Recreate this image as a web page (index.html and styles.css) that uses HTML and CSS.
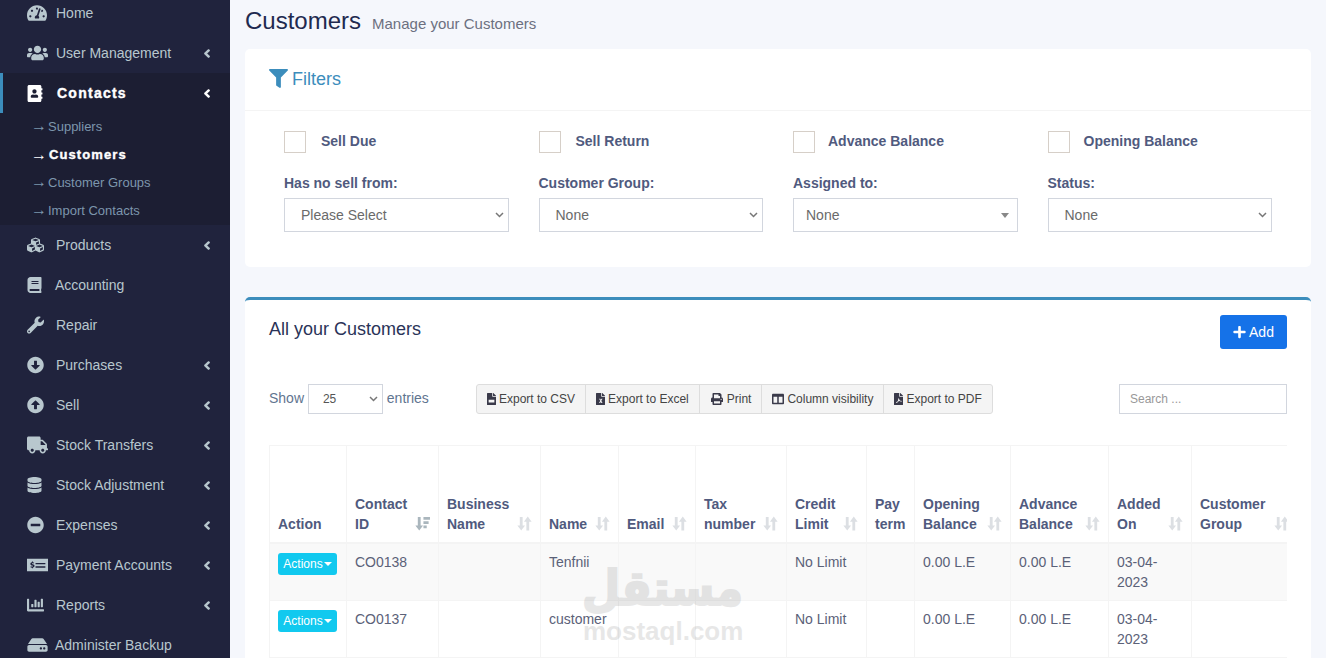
FILE: index.html
```html
<!DOCTYPE html>
<html lang="en">
<head>
<meta charset="utf-8">
<title>Customers</title>
<link rel="stylesheet" href="styles.css">
</head>
<body>
<svg class="defs" xmlns="http://www.w3.org/2000/svg">
<symbol id="i-chev" viewBox="0 0 320 512"><path d="M34.52 239.03L228.87 44.69c9.37-9.37 24.57-9.37 33.94 0l22.67 22.67c9.36 9.36 9.37 24.52.04 33.9L131.49 256l154.02 154.75c9.34 9.38 9.32 24.54-.04 33.9l-22.67 22.67c-9.37 9.37-24.57 9.37-33.94 0L34.52 272.97c-9.37-9.37-9.37-24.57 0-33.94z"/></symbol>
<symbol id="i-home" viewBox="0 0 576 512"><path d="M288 32C128.94 32 0 160.94 0 320c0 52.8 14.25 102.26 39.06 144.8 5.61 9.62 16.3 15.2 27.44 15.2h443c11.14 0 21.83-5.58 27.44-15.2C561.75 422.26 576 372.8 576 320c0-159.06-128.94-288-288-288zm0 64c14.71 0 26.58 10.13 30.32 23.65-1.11 2.26-2.64 4.23-3.45 6.67l-9.22 27.67c-5.13 3.49-10.97 6.01-17.64 6.01-17.67 0-32-14.33-32-32S270.33 96 288 96zM96 384c-17.67 0-32-14.33-32-32s14.33-32 32-32 32 14.33 32 32-14.33 32-32 32zm48-160c-17.67 0-32-14.33-32-32s14.33-32 32-32 32 14.33 32 32-14.33 32-32 32zm246.77-72.41l-61.33 184C343.13 347.33 352 364.54 352 384c0 11.72-3.38 22.55-8.88 32H232.88c-5.5-9.45-8.88-20.28-8.88-32 0-33.94 26.5-61.43 59.9-63.59l61.34-184.01c4.17-12.56 17.73-19.45 30.36-15.17 12.57 4.19 19.35 17.79 15.17 30.36zm14.66 57.2l15.52-46.55c3.47-1.29 7.13-2.23 11.05-2.23 17.67 0 32 14.33 32 32s-14.33 32-32 32c-11.38-.01-20.89-6.28-26.57-15.22zM480 384c-17.67 0-32-14.33-32-32s14.33-32 32-32 32 14.33 32 32-14.33 32-32 32z"/></symbol>
<symbol id="i-users" viewBox="0 0 640 512"><path d="M96 224c35.3 0 64-28.7 64-64s-28.7-64-64-64-64 28.7-64 64 28.7 64 64 64zm448 0c35.3 0 64-28.7 64-64s-28.7-64-64-64-64 28.7-64 64 28.7 64 64 64zm32 32h-64c-17.6 0-33.5 7.1-45.1 18.6 40.3 22.1 68.9 62 75.1 109.4h66c17.7 0 32-14.3 32-32v-32c0-35.3-28.7-64-64-64zm-256 0c61.9 0 112-50.1 112-112S381.9 32 320 32 208 82.1 208 144s50.1 112 112 112zm76.8 32h-8.3c-20.8 10-43.9 16-68.5 16s-47.6-6-68.5-16h-8.3C179.6 288 128 339.6 128 403.2V432c0 26.5 21.5 48 48 48h288c26.5 0 48-21.5 48-48v-28.8c0-63.6-51.6-115.2-115.2-115.2zm-223.7-13.4C161.5 263.1 145.6 256 128 256H64c-35.3 0-64 28.7-64 64v32c0 17.7 14.3 32 32 32h65.9c6.3-47.4 34.9-87.3 75.2-109.4z"/></symbol>
<symbol id="i-contacts" viewBox="0 0 448 512"><path d="M436 160c6.6 0 12-5.4 12-12v-40c0-6.6-5.4-12-12-12h-20V48c0-26.5-21.5-48-48-48H48C21.5 0 0 21.5 0 48v416c0 26.5 21.5 48 48 48h320c26.5 0 48-21.5 48-48v-48h20c6.6 0 12-5.4 12-12v-40c0-6.6-5.4-12-12-12h-20v-64h20c6.6 0 12-5.4 12-12v-40c0-6.6-5.4-12-12-12h-20v-64h20zm-228-32c35.3 0 64 28.7 64 64s-28.7 64-64 64-64-28.7-64-64 28.7-64 64-64zm112 236.8c0 10.6-10 19.2-22.4 19.2H118.4C106 384 96 375.4 96 364.8v-19.2c0-31.8 30.1-57.6 67.2-57.6h5c12.3 5.1 25.7 8 39.8 8s27.6-2.9 39.8-8h5c37.1 0 67.2 25.8 67.2 57.6v19.2z"/></symbol>
<symbol id="i-cubes" viewBox="0 0 512 512"><path d="M488.6 250.2L392 214V105.5c0-15-9.3-28.4-23.4-33.7l-100-37.5c-8.1-3.1-17.1-3.1-25.3 0l-100 37.5c-14.1 5.3-23.4 18.7-23.4 33.7V214l-96.6 36.2C9.3 255.5 0 268.9 0 283.9V394c0 13.6 7.7 26.1 19.9 32.2l100 50c10.1 5.1 22.1 5.1 32.2 0l103.9-52 103.9 52c10.1 5.1 22.1 5.1 32.2 0l100-50c12.2-6.1 19.9-18.6 19.9-32.2V283.9c0-15-9.3-28.4-23.4-33.7zM358 214.8l-85 31.9v-68.2l85-37v73.3zM154 104.1l102-38.2 102 38.2v.6l-102 41.4-102-41.4v-.6zm84 291.1l-85 42.5v-79.1l85-38.8v75.4zm0-112l-102 41.4-102-41.4v-.6l102-38.2 102 38.2v.6zm240 112l-85 42.5v-79.1l85-38.8v75.4zm0-112l-102 41.4-102-41.4v-.6l102-38.2 102 38.2v.6z"/></symbol>
<symbol id="i-book" viewBox="0 0 448 512"><path d="M448 360V24c0-13.3-10.7-24-24-24H96C43 0 0 43 0 96v320c0 53 43 96 96 96h328c13.3 0 24-10.7 24-24v-16c0-7.5-3.5-14.3-8.9-18.7-4.2-15.4-4.2-59.3 0-74.7 5.4-4.3 8.9-11.1 8.9-18.6zM128 134c0-3.3 2.7-6 6-6h212c3.3 0 6 2.7 6 6v20c0 3.3-2.7 6-6 6H134c-3.3 0-6-2.7-6-6v-20zm0 64c0-3.3 2.7-6 6-6h212c3.3 0 6 2.7 6 6v20c0 3.3-2.7 6-6 6H134c-3.3 0-6-2.7-6-6v-20zm253.4 250H96c-17.7 0-32-14.3-32-32 0-17.6 14.4-32 32-32h285.4c-1.9 17.1-1.9 46.9 0 64z"/></symbol>
<symbol id="i-wrench" viewBox="0 0 512 512"><path d="M507.73 109.1c-2.24-9.03-13.54-12.09-20.12-5.51l-74.36 74.36-67.88-11.31-11.31-67.88 74.36-74.36c6.62-6.62 3.43-17.9-5.66-20.16-47.38-11.74-99.55.91-136.58 37.93-39.64 39.64-50.55 97.1-34.05 147.2L18.74 402.76c-24.99 24.99-24.99 65.51 0 90.5 24.99 24.99 65.51 24.99 90.5 0l213.21-213.21c50.12 16.71 107.47 5.68 147.37-34.22 37.07-37.07 49.7-89.32 37.91-136.73zM64 472c-13.25 0-24-10.75-24-24 0-13.26 10.75-24 24-24s24 10.74 24 24c0 13.25-10.75 24-24 24z"/></symbol>
<symbol id="i-down" viewBox="0 0 512 512"><path d="M504 256c0 137-111 248-248 248S8 393 8 256 119 8 256 8s248 111 248 248zM212 140v116h-70.9c-10.7 0-16.1 13-8.5 20.5l114.9 114.3c4.7 4.7 12.2 4.7 16.9 0l114.9-114.3c7.6-7.6 2.2-20.5-8.5-20.5H300V140c0-6.6-5.4-12-12-12h-64c-6.6 0-12 5.4-12 12z"/></symbol>
<symbol id="i-up" viewBox="0 0 512 512"><path d="M8 256C8 119 119 8 256 8s248 111 248 248-111 248-248 248S8 393 8 256zm292 116V256h70.9c10.7 0 16.1-13 8.5-20.5L264.5 121.2c-4.7-4.7-12.2-4.7-16.9 0l-115 114.3c-7.6 7.6-2.2 20.5 8.5 20.5H212v116c0 6.6 5.4 12 12 12h64c6.6 0 12-5.4 12-12z"/></symbol>
<symbol id="i-truck" viewBox="0 0 640 512"><path d="M624 352h-16V243.9c0-12.7-5.1-24.9-14.1-33.9L494 110.1c-9-9-21.2-14.1-33.9-14.1H416V48c0-26.5-21.5-48-48-48H48C21.5 0 0 21.5 0 48v320c0 26.5 21.5 48 48 48h16c0 53 43 96 96 96s96-43 96-96h128c0 53 43 96 96 96s96-43 96-96h48c8.8 0 16-7.2 16-16v-32c0-8.8-7.2-16-16-16zM160 464c-26.5 0-48-21.5-48-48s21.5-48 48-48 48 21.5 48 48-21.5 48-48 48zm320 0c-26.5 0-48-21.5-48-48s21.5-48 48-48 48 21.5 48 48-21.5 48-48 48zm80-208H416V144h44.1l99.9 99.9V256z"/></symbol>
<symbol id="i-db" viewBox="0 0 448 512"><path d="M448 73.143v45.714C448 159.143 347.667 192 224 192S0 159.143 0 118.857V73.143C0 32.857 100.333 0 224 0s224 32.857 224 73.143zM448 176v102.857C448 319.143 347.667 352 224 352S0 319.143 0 278.857V176c48.125 33.143 136.208 48.572 224 48.572S399.874 209.143 448 176zm0 160v102.857C448 479.143 347.667 512 224 512S0 479.143 0 438.857V336c48.125 33.143 136.208 48.572 224 48.572S399.874 369.143 448 336z"/></symbol>
<symbol id="i-minus" viewBox="0 0 512 512"><path d="M256 8C119 8 8 119 8 256s111 248 248 248 248-111 248-248S393 8 256 8zM124 296c-6.6 0-12-5.4-12-12v-56c0-6.6 5.4-12 12-12h264c6.6 0 12 5.4 12 12v56c0 6.6-5.4 12-12 12H124z"/></symbol>
<symbol id="i-money" viewBox="0 0 640 512"><path fill-rule="evenodd" d="M0 64h640v384H0zM260 192v40h300v-40zM260 296v40h300v-40zM150 150v22c-28 5-48 26-48 52 0 29 23 42 52 50 22 6 28 10 28 17 0 8-10 13-26 13-14 0-28-4-40-11l-12 30c12 7 28 12 46 13v22h32v-23c28-5 48-26 48-53 0-30-24-42-52-50-22-6-28-10-28-16 0-7 8-12 24-12 13 0 24 3 34 8l10-30c-10-5-22-8-36-10v-22z"/></symbol>
<symbol id="i-chart" viewBox="0 0 512 512"><path d="M332.8 320h38.4c6.4 0 12.8-6.4 12.8-12.8V172.8c0-6.4-6.4-12.8-12.8-12.8h-38.4c-6.4 0-12.8 6.4-12.8 12.8v134.4c0 6.4 6.4 12.8 12.8 12.8zm96 0h38.4c6.4 0 12.8-6.4 12.8-12.8V76.8c0-6.4-6.4-12.8-12.8-12.8h-38.4c-6.4 0-12.8 6.4-12.8 12.8v230.4c0 6.4 6.4 12.8 12.8 12.8zm-288 0h38.4c6.4 0 12.8-6.4 12.8-12.8v-70.4c0-6.4-6.4-12.8-12.8-12.8h-38.4c-6.4 0-12.8 6.4-12.8 12.8v70.4c0 6.4 6.4 12.8 12.8 12.8zm96 0h38.4c6.4 0 12.8-6.4 12.8-12.8V108.8c0-6.4-6.4-12.8-12.8-12.8h-38.4c-6.4 0-12.8 6.4-12.8 12.8v198.4c0 6.4 6.4 12.8 12.8 12.8zM496 384H64V80c0-8.84-7.16-16-16-16H16C7.16 64 0 71.16 0 80v336c0 17.67 14.33 32 32 32h464c8.84 0 16-7.16 16-16v-32c0-8.84-7.16-16-16-16z"/></symbol>
<symbol id="i-hdd" viewBox="0 0 576 512"><path d="M576 304v96c0 26.51-21.49 48-48 48H48c-26.51 0-48-21.49-48-48v-96c0-26.51 21.49-48 48-48h480c26.51 0 48 21.49 48 48zm-48-80a79.557 79.557 0 0 1 30.777 6.165L462.25 85.374A48.003 48.003 0 0 0 422.311 64H153.689a48 48 0 0 0-39.939 21.374L17.223 230.165A79.557 79.557 0 0 1 48 224h480zm-48 96c-17.673 0-32 14.327-32 32s14.327 32 32 32 32-14.327 32-32-14.327-32-32-32zm-96 0c-17.673 0-32 14.327-32 32s14.327 32 32 32 32-14.327 32-32-14.327-32-32-32z"/></symbol>
<symbol id="i-filter" viewBox="0 0 512 512"><path d="M487.976 0H24.028C2.71 0-8.047 25.866 7.058 40.971L192 225.941V432c0 7.831 3.821 15.17 10.237 19.662l80 55.98C298.02 518.69 320 507.493 320 487.98V225.941l184.947-184.97C520.021 25.896 509.338 0 487.976 0z"/></symbol>
<symbol id="i-plus" viewBox="0 0 448 512"><path d="M416 208H272V64c0-17.67-14.33-32-32-32h-32c-17.67 0-32 14.33-32 32v144H32c-17.67 0-32 14.33-32 32v32c0 17.67 14.33 32 32 32h144v144c0 17.67 14.33 32 32 32h32c17.67 0 32-14.33 32-32V304h144c17.67 0 32-14.33 32-32v-32c0-17.67-14.33-32-32-32z"/></symbol>
<symbol id="i-print" viewBox="0 0 512 512"><path d="M448 192V77.25c0-8.49-3.37-16.62-9.37-22.63L393.37 9.37c-6-6-14.14-9.37-22.63-9.37H96C78.33 0 64 14.33 64 32v160c-35.35 0-64 28.65-64 64v112c0 8.84 7.16 16 16 16h48v96c0 17.67 14.33 32 32 32h320c17.67 0 32-14.33 32-32v-96h48c8.84 0 16-7.16 16-16V256c0-35.35-28.65-64-64-64zm-64 256H128v-96h256v96zm0-224H128V64h192v48c0 8.84 7.16 16 16 16h48v96zm48 72c-13.25 0-24-10.75-24-24 0-13.27 10.75-24 24-24s24 10.73 24 24c0 13.25-10.75 24-24 24z"/></symbol>
<symbol id="i-cols" viewBox="0 0 512 512"><path d="M464 32H48C21.49 32 0 53.49 0 80v352c0 26.51 21.49 48 48 48h416c26.51 0 48-21.49 48-48V80c0-26.51-21.49-48-48-48zM224 416H64V160h160v256zm224 0H288V160h160v256z"/></symbol>
<symbol id="i-csv" viewBox="0 0 384 512"><path fill-rule="evenodd" d="M224 136V0H24C10.7 0 0 10.7 0 24v464c0 13.3 10.7 24 24 24h336c13.3 0 24-10.7 24-24V160H248c-13.2 0-24-10.8-24-24zm160-14.1v6.1H256V0h6.1c6.400 0 12.5 2.5 17 7l97.9 98c4.500 4.500 7 10.6 7 16.9zM70 290h244v110H70z"/></symbol>
<symbol id="i-xls" viewBox="0 0 384 512"><path fill-rule="evenodd" d="M224 136V0H24C10.7 0 0 10.7 0 24v464c0 13.3 10.7 24 24 24h336c13.3 0 24-10.7 24-24V160H248c-13.2 0-24-10.8-24-24zm160-14.1v6.1H256V0h6.1c6.400 0 12.5 2.5 17 7l97.9 98c4.500 4.500 7 10.6 7 16.9zM130 240h50l24 48 24-48h50l-50 92 50 92h-50l-24-48-24 48h-50l50-92z"/></symbol>
<symbol id="i-pdf" viewBox="0 0 384 512"><path fill-rule="evenodd" d="M224 136V0H24C10.7 0 0 10.7 0 24v464c0 13.3 10.7 24 24 24h336c13.3 0 24-10.7 24-24V160H248c-13.2 0-24-10.8-24-24zm160-14.1v6.1H256V0h6.1c6.400 0 12.5 2.5 17 7l97.9 98c4.500 4.500 7 10.6 7 16.9zM176 230h36c8 40 26 80 50 104 22-2 52-2 64 10 10 12 4 30-16 30-20 0-42-12-60-28-30 4-58 14-84 24-20 36-36 56-56 56-18 0-26-20-14-34 12-12 32-20 50-28 14-26 26-54 32-80-6-24-8-40-2-54z"/></symbol>
<symbol id="i-sort" viewBox="0 0 16 16"><path d="M3 1h3v9h2.600L4.500 15.500.4 10H3zM10 15.500h3V6h2.600L11.500.5 7.400 6H10z"/></symbol>
<symbol id="i-sortd" viewBox="0 0 16 16"><path d="M3 1h3v9h2.600L4.500 15.500.4 10H3zM9 1h7v3H9zM9 5.500h5.500v3H9zM9 10h3.500v3H9z"/></symbol>
</svg>

<aside class="sidebar">
  <ul class="menu">
    <li class="item"><svg class="ic ic-home"><use href="#i-home"/></svg><span class="lbl">Home</span></li>
    <li class="item"><svg class="ic ic-users"><use href="#i-users"/></svg><span class="lbl">User Management</span><svg class="chev"><use href="#i-chev"/></svg></li>
    <li class="group">
      <div class="item active"><svg class="ic ic-contacts"><use href="#i-contacts"/></svg><span class="lbl">Contacts</span><svg class="chev"><use href="#i-chev"/></svg></div>
      <ul class="sub">
        <li class="sub-item"><span class="arrow">→</span>Suppliers</li>
        <li class="sub-item current"><span class="arrow">→</span>Customers</li>
        <li class="sub-item"><span class="arrow">→</span>Customer Groups</li>
        <li class="sub-item"><span class="arrow">→</span>Import Contacts</li>
      </ul>
    </li>
    <li class="item"><svg class="ic ic-cubes"><use href="#i-cubes"/></svg><span class="lbl">Products</span><svg class="chev"><use href="#i-chev"/></svg></li>
    <li class="item tight"><svg class="ic ic-book"><use href="#i-book"/></svg><span class="lbl">Accounting</span></li>
    <li class="item"><svg class="ic ic-cubes"><use href="#i-wrench"/></svg><span class="lbl">Repair</span></li>
    <li class="item"><svg class="ic ic-cubes"><use href="#i-down"/></svg><span class="lbl">Purchases</span><svg class="chev"><use href="#i-chev"/></svg></li>
    <li class="item"><svg class="ic ic-cubes"><use href="#i-up"/></svg><span class="lbl">Sell</span><svg class="chev"><use href="#i-chev"/></svg></li>
    <li class="item"><svg class="ic ic-users"><use href="#i-truck"/></svg><span class="lbl">Stock Transfers</span><svg class="chev"><use href="#i-chev"/></svg></li>
    <li class="item"><svg class="ic ic-db"><use href="#i-db"/></svg><span class="lbl">Stock Adjustment</span><svg class="chev"><use href="#i-chev"/></svg></li>
    <li class="item"><svg class="ic ic-cubes"><use href="#i-minus"/></svg><span class="lbl">Expenses</span><svg class="chev"><use href="#i-chev"/></svg></li>
    <li class="item"><svg class="ic ic-users"><use href="#i-money"/></svg><span class="lbl">Payment Accounts</span><svg class="chev"><use href="#i-chev"/></svg></li>
    <li class="item"><svg class="ic ic-cubes"><use href="#i-chart"/></svg><span class="lbl">Reports</span><svg class="chev"><use href="#i-chev"/></svg></li>
    <li class="item tight"><svg class="ic ic-users"><use href="#i-hdd"/></svg><span class="lbl">Administer Backup</span></li>
  </ul>
</aside>

<main class="content">
  <header class="page-head">
    <h1 class="page-title">Customers</h1>
    <small class="page-sub">Manage your Customers</small>
  </header>

  <section class="card">
    <div class="filter-head">
      <svg class="filter-ic"><use href="#i-filter"/></svg><span>Filters</span>
    </div>
    <div class="filter-grid">
      <div class="field"><label class="check"><span class="box"></span>Sell Due</label><label class="flabel">Has no sell from:</label><select class="sel"><option>Please Select</option></select></div>
      <div class="field"><label class="check"><span class="box"></span>Sell Return</label><label class="flabel">Customer Group:</label><select class="sel"><option>None</option></select></div>
      <div class="field"><label class="check check-near"><span class="box"></span>Advance Balance</label><label class="flabel">Assigned to:</label><div class="sel2">None<span class="tri"></span></div></div>
      <div class="field"><label class="check check-mid"><span class="box"></span>Opening Balance</label><label class="flabel">Status:</label><select class="sel"><option>None</option></select></div>
    </div>
  </section>

  <section class="card card-primary">
    <div class="box-head">
      <h2 class="box-title">All your Customers</h2>
      <button class="btn-add"><svg class="plus"><use href="#i-plus"/></svg>Add</button>
    </div>
    <div class="controls">
      <div class="length">Show <select class="len-sel"><option>25</option></select> entries</div>
      <div class="btns">
        <span class="tool"><svg class="tool-ic"><use href="#i-csv"/></svg>Export to CSV</span>
        <span class="tool"><svg class="tool-ic"><use href="#i-xls"/></svg>Export to Excel</span>
        <span class="tool"><svg class="tool-ic wide print-ic"><use href="#i-print"/></svg>Print</span>
        <span class="tool"><svg class="tool-ic wide"><use href="#i-cols"/></svg>Column visibility</span>
        <span class="tool"><svg class="tool-ic"><use href="#i-pdf"/></svg>Export to PDF</span>
      </div>
      <input class="search" type="text" placeholder="Search ...">
    </div>
    <div class="table-wrap">
      <table class="grid">
        <thead>
          <tr>
            <th>Action</th>
            <th class="s">Contact ID<svg class="sort on"><use href="#i-sortd"/></svg></th>
            <th class="s">Business Name<svg class="sort"><use href="#i-sort"/></svg></th>
            <th class="s">Name<svg class="sort"><use href="#i-sort"/></svg></th>
            <th class="s">Email<svg class="sort"><use href="#i-sort"/></svg></th>
            <th class="s">Tax number<svg class="sort"><use href="#i-sort"/></svg></th>
            <th class="s">Credit Limit<svg class="sort"><use href="#i-sort"/></svg></th>
            <th>Pay term</th>
            <th class="s">Opening Balance<svg class="sort"><use href="#i-sort"/></svg></th>
            <th class="s">Advance Balance<svg class="sort"><use href="#i-sort"/></svg></th>
            <th class="s">Added On<svg class="sort"><use href="#i-sort"/></svg></th>
            <th class="s">Customer Group<svg class="sort"><use href="#i-sort"/></svg></th>
          </tr>
        </thead>
        <tbody>
          <tr class="odd">
            <td><span class="act">Actions<span class="caret"></span></span></td><td>CO0138</td><td></td><td>Tenfnii</td><td></td><td></td><td>No Limit</td><td></td><td>0.00 L.E</td><td>0.00 L.E</td><td>03-04-2023</td><td></td>
          </tr>
          <tr>
            <td><span class="act">Actions<span class="caret"></span></span></td><td>CO0137</td><td></td><td>customer</td><td></td><td></td><td>No Limit</td><td></td><td>0.00 L.E</td><td>0.00 L.E</td><td>03-04-2023</td><td></td>
          </tr>
        </tbody>
      </table>
    </div>
  </section>
</main>

<div class="watermark" aria-hidden="true">
  <div class="wm-ar" lang="ar" dir="rtl">مستقل</div>
  <div class="wm-en">mostaql.com</div>
</div>
</body>
</html>
```

FILE: styles.css
```css
* { box-sizing: border-box; }
html, body { margin: 0; padding: 0; height: 100%; }
body {
  display: flex;
  height: 658px;
  overflow: hidden;
  background: #f5f7fc;
  font-family: "Liberation Sans", Arial, sans-serif;
  font-size: 14px;
  color: #5b6178;
  position: relative;
}
.defs { position: absolute; width: 0; height: 0; overflow: hidden; }
ul { list-style: none; margin: 0; padding: 0; }

/* sidebar */
.sidebar { width: 230px; flex: none; background: #20233d; overflow: hidden; color: #b8c7ce; }
.menu { margin-top: -7px; }
.item { display: flex; align-items: center; height: 40px; padding-left: 27px; padding-right: 20px; }
.lbl { flex: 1; }
.ic { fill: currentColor; flex: none; height: 18px; margin-right: 9px; }
.ic-home { width: 20px; }
.ic-users { width: 21px; margin-right: 8px; }
.ic-contacts { width: 16px; height: 17px; margin-right: 14px; color: #fff; }
.ic-cubes { width: 17px; margin-right: 12px; }
.ic-book { width: 15px; height: 16px; margin-right: 13px; }
.ic-db { width: 15px; height: 16px; margin-right: 14px; }
.tight .ic-users { margin-right: 7px; }
.chev { width: 6px; height: 9px; fill: currentColor; stroke: currentColor; stroke-width: 60px; flex: none; overflow: visible; }
.group { background: #1c1e33; }
.active { color: #fff; font-weight: 700; padding-left: 27px; box-shadow: inset 3px 0 0 #3c8dbc; }
.active .lbl { letter-spacing: 1.25px; -webkit-text-stroke: .4px #fff; }
.sub-item { height: 28px; display: flex; align-items: center; font-size: 13px; padding-left: 31px; padding-bottom: 2px; color: #7d96ad; }
.arrow { width: 17px; flex: none; font-size: 16px; line-height: 16px; }
.current { color: #fff; font-weight: 700; letter-spacing: 1.1px; -webkit-text-stroke: .4px #fff; padding-bottom: 1px; }
.current .arrow { -webkit-text-stroke: 0; font-weight: 400; letter-spacing: 0; width: 18px; }

/* content */
.content { flex: 1; min-width: 0; padding: 0 15px; }
.page-head { display: flex; align-items: baseline; height: 49px; padding-top: 5px; }
.page-title { margin: 0; font-size: 24px; line-height: 32px; font-weight: 400; color: #1f2a50; }
.page-sub { font-size: 15px; color: #6c7080; margin-left: 11px; }

.card { background: #fff; border-radius: 5px; margin-bottom: 30px; }
.filter-head { height: 62px; border-bottom: 1px solid #f4f4f4; padding: 0 24px; display: flex; align-items: center; color: #3c8dbc; font-size: 18px; }
.filter-ic { width: 19px; height: 19px; fill: currentColor; margin-right: 4px; margin-top: -3px; }
.filter-grid { display: grid; grid-template-columns: repeat(4, 1fr); padding: 20px 24px 35px; }
.field { padding: 0 15px; display: flex; flex-direction: column; }
.check { display: flex; align-items: flex-start; height: 22px; line-height: 20px; font-weight: 700; color: #505a7e; }
.box { width: 22px; height: 22px; border: 1px solid #d6cfc8; margin-right: 15px; background: #fff; }
.check-near .box { margin-right: 13px; }
.check-mid .box { margin-right: 14px; }
.flabel { margin-top: 20px; height: 25px; line-height: 20px; font-weight: 700; color: #505a7e; }
.sel { appearance: none; height: 34px; width: 100%; border: 1px solid #d2d6de; padding: 6px 16px; font: 14px "Liberation Sans", Arial, sans-serif; color: #6a6a6a; border-radius: 0; background: #fff url("data:image/svg+xml,%3Csvg xmlns='http://www.w3.org/2000/svg' width='9' height='6'%3E%3Cpath d='M1 1l3.500 3.500L8 1' fill='none' stroke='%23777' stroke-width='1.500'/%3E%3C/svg%3E") no-repeat right 4px center; }
.sel2 { height: 34px; border: 1px solid #d2d6de; background: #fff; padding: 0 12px; line-height: 32px; color: #6a6a6a; display: flex; justify-content: space-between; align-items: center; }
.tri { width: 0; height: 0; border-left: 4px solid transparent; border-right: 4px solid transparent; border-top: 5px solid #888; margin-right: -4px; }

.card-primary { border-top: 3px solid #3c8dbc; padding: 0 24px; height: 420px; }
.box-head { display: flex; justify-content: space-between; align-items: flex-start; padding-top: 15px; }
.box-title { margin: 0; font-size: 18px; font-weight: 400; line-height: 28px; color: #2a3358; }
.btn-add { height: 34px; width: 67px; border: 0; border-radius: 3px; background: #1572e8; color: #fff; font: 14px "Liberation Sans", Arial, sans-serif; display: flex; align-items: center; justify-content: center; padding: 0; }
.plus { width: 13px; height: 14px; fill: currentColor; margin-right: 3px; }

.controls { display: flex; align-items: center; margin-top: 35px; height: 30px; justify-content: space-between; }
.length { width: 207px; flex: none; color: #5f7590; }
.len-sel { appearance: none; width: 75px; height: 30px; border: 1px solid #d2d6de; padding: 0 14px; font: 12px "Liberation Sans", Arial, sans-serif; color: #555; border-radius: 0; background: #fff url("data:image/svg+xml,%3Csvg xmlns='http://www.w3.org/2000/svg' width='9' height='6'%3E%3Cpath d='M1 1l3.500 3.500L8 1' fill='none' stroke='%23777' stroke-width='1.500'/%3E%3C/svg%3E") no-repeat right 4px center; }
.btns { display: flex; height: 30px; border: 1px solid #ddd; border-radius: 3px; background: #f4f4f4; font-size: 12px; color: #444; margin-right: auto; }
.tool { display: flex; align-items: center; padding: 0 10px; border-left: 1px solid #ddd; }
.tool:first-child { border-left: 0; }
.tool-ic { width: 9px; height: 12px; fill: #3a3a4a; margin-right: 3px; }
.tool-ic.wide { width: 12px; }
.tool-ic.print-ic { margin-left: 1px; margin-right: 4px; }
.search { width: 168px; height: 30px; border: 1px solid #d2d6de; padding: 0 10px; font: 12px "Liberation Sans", Arial, sans-serif; color: #555; border-radius: 0; outline: 0; }
.search::placeholder { color: #999; }

.table-wrap { margin-top: 31px; overflow: hidden; }
.grid { border-collapse: collapse; table-layout: fixed; width: 1028px; }
.grid th, .grid td { border: 1px solid #f4f4f4; padding: 8px; line-height: 20px; vertical-align: top; text-align: left; }
.grid th { vertical-align: bottom; height: 97px; font-weight: 700; color: #505a7e; border-bottom-width: 2px; position: relative; padding-bottom: 8px; }
.grid th.s { padding-right: 26px; }
.grid td { height: 57px; }
.grid .odd td { height: 58px; background: #f9f9f9; }
.grid th:nth-child(1) { width: 77px; }
.grid th:nth-child(2) { width: 92px; }
.grid th:nth-child(3) { width: 102px; }
.grid th:nth-child(4) { width: 78px; }
.grid th:nth-child(5) { width: 77px; }
.grid th:nth-child(6) { width: 91px; }
.grid th:nth-child(7) { width: 80px; }
.grid th:nth-child(8) { width: 48px; }
.grid th:nth-child(9) { width: 96px; }
.grid th:nth-child(10) { width: 98px; }
.grid th:nth-child(11) { width: 83px; }
.grid th:nth-child(12) { width: 106px; }
.sort { position: absolute; right: 8px; bottom: 11px; width: 15px; height: 15px; fill: #dcdfe3; }
.sort.on { fill: #aab6bd; }
.act { display: inline-flex; align-items: center; justify-content: center; width: 59px; height: 22px; margin-top: 1px; border-radius: 3px; background: #11c9ef; color: #fff; font-size: 12px; }
.caret { width: 0; height: 0; border-left: 4px solid transparent; border-right: 4px solid transparent; border-top: 4px solid #fff; margin-left: 1px; }

.watermark { position: absolute; left: 583px; top: 566px; width: 160px; text-align: center; color: #6e6e6e; opacity: .16; font-weight: 700; pointer-events: none; }
.wm-ar { font-family: "DejaVu Sans", sans-serif; font-size: 44px; line-height: 50px; -webkit-text-stroke: 2px #6e6e6e; transform: scaleY(1.1); transform-origin: bottom; }
.wm-en { font-size: 26px; line-height: 30px; }
```
